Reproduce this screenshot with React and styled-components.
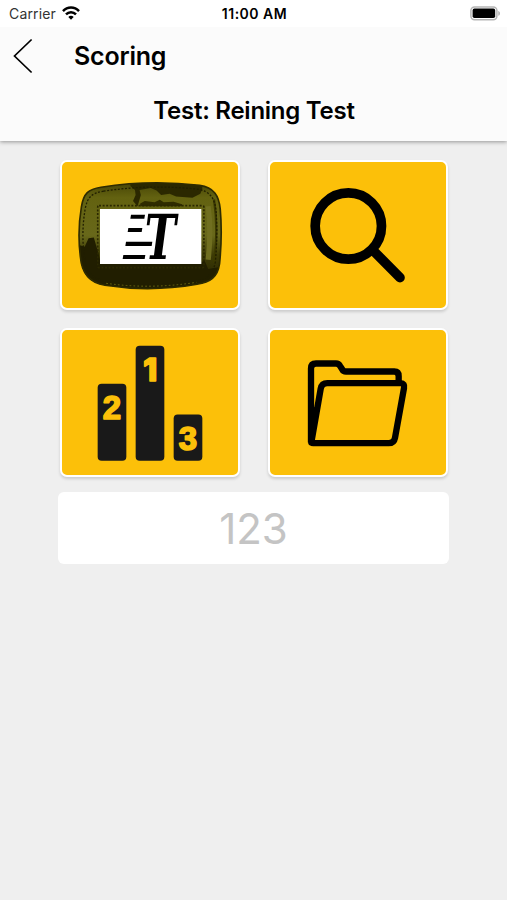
import styled, { createGlobalStyle } from "styled-components";

function App() {
  return (
    <>
      <GlobalStyle />
      <Screen>
        <StatusBar>
          <Carrier>
            <span>Carrier</span>
            <WifiIcon />
          </Carrier>
          <Clock>11:00 AM</Clock>
          <BatteryBox>
            <BatteryIcon />
          </BatteryBox>
        </StatusBar>
        <Header>
          <TitleRow>
            <BackBtn aria-label="Back">
              <svg width="20" height="36" viewBox="0 0 20 36" fill="none" stroke="#000" strokeWidth="1.7">
                <path d="M18.6 1.5 1.5 18l17.1 16.5" />
              </svg>
            </BackBtn>
            <Title>Scoring</Title>
          </TitleRow>
          <TestName>Test: Reining Test</TestName>
        </Header>
        <Main>
          <CardGrid>
            <Card aria-label="Back number">
              <BackNumberIcon />
            </Card>
            <Card aria-label="Search">
              <SearchIcon />
            </Card>
            <Card aria-label="Ranking">
              <RankingIcon />
            </Card>
            <Card aria-label="Files">
              <FolderIcon />
            </Card>
          </CardGrid>
          <NumberInput type="text" placeholder="123" />
        </Main>
      </Screen>
    </>
  );
}

export default App;

function WifiIcon() {
  return (
    <svg width="18" height="14" viewBox="0 0 18 14" fill="none" stroke="#000" strokeWidth="2.5">
      <path d="M1 5.2C5.5.4 12.5.4 17 5.2" />
      <path d="M4 8.3C6.8 5.4 11.2 5.4 14 8.3" />
      <path d="M9 13.7 6.3 10.9C7.8 9.5 10.2 9.5 11.7 10.9Z" fill="#000" stroke="none" />
    </svg>
  );
}

function BatteryIcon() {
  return (
    <svg width="31" height="15" viewBox="0 0 31 15">
      <rect x="0.9" y="0.9" width="26" height="12.8" rx="3.6" fill="#fff" stroke="#b5b5b5" strokeWidth="1.5" />
      <rect x="2.6" y="2.6" width="22.6" height="9.4" rx="1.8" />
      <path d="M28.4 5c1.9.5 1.9 4.3 0 4.8z" fill="#a5a5a5" />
    </svg>
  );
}

function BackNumberIcon() {
  return (
    <svg viewBox="36 36 528 436.5">
      <defs>
        <linearGradient id="leather" x1="0" y1="0" x2="0" y2="1">
          <stop offset="0" stopColor="#454306" />
          <stop offset="0.15" stopColor="#636210" />
          <stop offset="0.5" stopColor="#68681a" />
          <stop offset="0.68" stopColor="#3e3c06" />
          <stop offset="1" stopColor="#211e00" />
        </linearGradient>
        <clipPath id="plate">
          <path d="M150 108Q300 84 452 102C496 108 511 134 515 174Q522 252 513 342C507 384 484 399 444 405Q300 430 162 408C112 400 91 370 87 322Q77 244 90 168C97 126 111 114 150 108Z" />
        </clipPath>
      </defs>
      <g transform="translate(6 6) scale(0.98)">
        <g clipPath="url(#plate)">
          <rect x="75" y="90" width="450" height="330" fill="url(#leather)" />
          {/* worn patches of the leather */}
          <path d="M240 90v14l14 12 2 16-8 18 14 16 10-34-4-16 34-6 18 8 14 14 26-4 20 8 50 4 24-12 6-14v-24z" fill="#2b2800" />
          <path d="M80 284 100 290 112 264 128 262 142 310 150 342H455L466 330 478 358 515 352V425H80Z" fill="#211e00" />
          <path d="M270 158l14-8 30 4 16-8 12 8 30-2 26 8v6H270z" fill="#2f2c00" />
          <path d="M478 166Q488 240 478 330" fill="none" stroke="#706f20" strokeWidth="16" />
          <path d="M496 145Q510 240 496 340" fill="none" stroke="#3b3900" strokeWidth="7" />
        </g>
        <path d="M150 108Q300 84 452 102C496 108 511 134 515 174Q522 252 513 342C507 384 484 399 444 405Q300 430 162 408C112 400 91 370 87 322Q77 244 90 168C97 126 111 114 150 108Z" fill="none" stroke="#2e2b00" strokeWidth="5" />
        <path d="M158 120Q300 98 446 114C484 120 498 142 502 178Q508 250 500 336C494 374 476 388 440 394Q300 418 168 397C122 390 104 364 99 320Q89 244 102 172C109 138 121 126 158 120Z" fill="none" stroke="#211f00" strokeWidth="4" strokeDasharray="6 5" />
        <rect x="140" y="164" width="325" height="190" rx="4" fill="none" stroke="#2b2800" strokeWidth="5" strokeDasharray="6 5" />
        <path d="M166 402Q300 421 442 399" fill="none" stroke="#777414" strokeWidth="2.5" strokeDasharray="5 7" />
      </g>
      <rect x="150" y="177" width="304" height="165" fill="#fff" />
      <path d="M243 194h42l-2 12h-42zM235 234h42l-2 12h-42zM228 275h79l-2 13h-79zM220 315h66l-2 12h-66z" />
      <LogoLetter transform="translate(284 327) scale(0.69 1)">T</LogoLetter>
    </svg>
  );
}

function SearchIcon() {
  return (
    <svg viewBox="30 36 528 436.5" fill="none" stroke="#000">
      <circle cx="265" cy="228" r="99.5" strokeWidth="29" />
      <path d="M342 304 420 383" strokeWidth="29" strokeLinecap="round" />
    </svg>
  );
}

function RankingIcon() {
  return (
    <svg viewBox="36 28.5 528 436.5">
      <g fill="#191919">
        <rect x="143" y="190" width="86" height="231" rx="12" />
        <rect x="257" y="76" width="86" height="345" rx="12" />
        <rect x="371" y="282" width="86" height="139" rx="12" />
      </g>
      <RankDigit x="186" y="295">2</RankDigit>
      <RankDigit x="301" y="182" $plain>1</RankDigit>
      <RankDigit x="414" y="387">3</RankDigit>
    </svg>
  );
}

function FolderIcon() {
  return (
    <svg viewBox="30 28.5 528 436.5" fill="none" stroke="#000" strokeWidth="19" strokeLinejoin="round">
      <path d="M153 366V144Q153 129 168 129H228Q236 129 240 136L247 147Q250 153 258 153H403Q416 153 416 167V184" />
      <path d="M154 366 182 205Q185 188 202 188H422Q435 188 432 203L405 352Q402 368 386 368H160Q153 368 154 360Z" />
      <path d="M160 260V330" strokeWidth="10" />
    </svg>
  );
}

const GlobalStyle = createGlobalStyle`
  * {
    box-sizing: border-box;
  }
  body {
    margin: 0;
    background: #efefef;
    color: #000;
    font-family: Inter, "Liberation Sans", sans-serif;
  }
  button {
    padding: 0;
    border: none;
    background: none;
    cursor: pointer;
  }
`;

const Screen = styled.div`
  width: 507px;
  height: 900px;
  overflow: hidden;
  background: #efefef;
`;

const StatusBar = styled.div`
  position: relative;
  z-index: 1;
  display: grid;
  grid-template-columns: 1fr auto 1fr;
  align-items: center;
  height: 27px;
  padding: 0 6px 0 9px;
  background: #fff;
`;

const Carrier = styled.div`
  display: flex;
  align-items: center;
  gap: 6px;
  color: #333;
  font-size: 14px;
  letter-spacing: 0.15px;
  svg {
    margin-top: -2px;
  }
`;

const Clock = styled.div`
  margin-right: 1px;
  font-size: 14px;
  font-weight: 600;
  letter-spacing: 0.5px;
  font-kerning: none;
`;

const BatteryBox = styled.div`
  display: flex;
  justify-content: flex-end;
`;

const Header = styled.header`
  position: relative;
  height: 114px;
  background: #fbfbfb;
  box-shadow: 0 1px 4px rgba(0, 0, 0, 0.38);
`;

const TitleRow = styled.div`
  display: flex;
  align-items: center;
  height: 58px;
  padding-left: 13px;
`;

const BackBtn = styled.button`
  display: flex;
  width: 61px;
`;

const Title = styled.h1`
  margin: 0;
  font-size: 25px;
  font-weight: 600;
  letter-spacing: -0.2px;
`;

const TestName = styled.h2`
  margin: 0;
  padding: 11px 0 0 1px;
  font-size: 24px;
  font-weight: 600;
  line-height: 30px;
  letter-spacing: -0.25px;
  text-align: center;
`;

const Main = styled.main`
  padding: 19px 58px 0;
`;

const CardGrid = styled.div`
  display: grid;
  grid-template-columns: 180px 180px;
  grid-auto-rows: 149.5px;
  padding-left: 2px;
  gap: 18px 28px;
`;

const Card = styled.button`
  border: 2px solid #fff;
  border-radius: 7px;
  background: #fcc009;
  box-shadow: 0 2px 3px rgba(0, 0, 0, 0.15);
  svg {
    display: block;
    width: 100%;
    height: 100%;
  }
`;

const LogoLetter = styled.text`
  font-family: "DejaVu Serif", serif;
  font-size: 183px;
  font-style: italic;
  font-weight: 700;
`;

// $plain draws the digit without a foot
const RankDigit = styled.text`
  fill: #fcc009;
  stroke: #fcc009;
  stroke-width: 5px;
  stroke-linejoin: round;
  font-family: ${({ $plain }) => ($plain ? "Inter" : '"Liberation Sans"')}, Arial, sans-serif;
  font-size: ${({ $plain }) => ($plain ? "95px" : "99px")};
  font-weight: ${({ $plain }) => ($plain ? 800 : 700)};
  text-anchor: middle;
`;

const NumberInput = styled.input`
  display: block;
  width: 391px;
  height: 72px;
  margin-top: 14.5px;
  padding: 1px 0 0;
  border: none;
  border-radius: 6px;
  background: #fff;
  font-family: Inter, "Liberation Sans", sans-serif;
  font-size: 42px;
  text-align: center;
  outline: none;
  &::placeholder {
    color: #c4c4c4;
    opacity: 1;
  }
`;
